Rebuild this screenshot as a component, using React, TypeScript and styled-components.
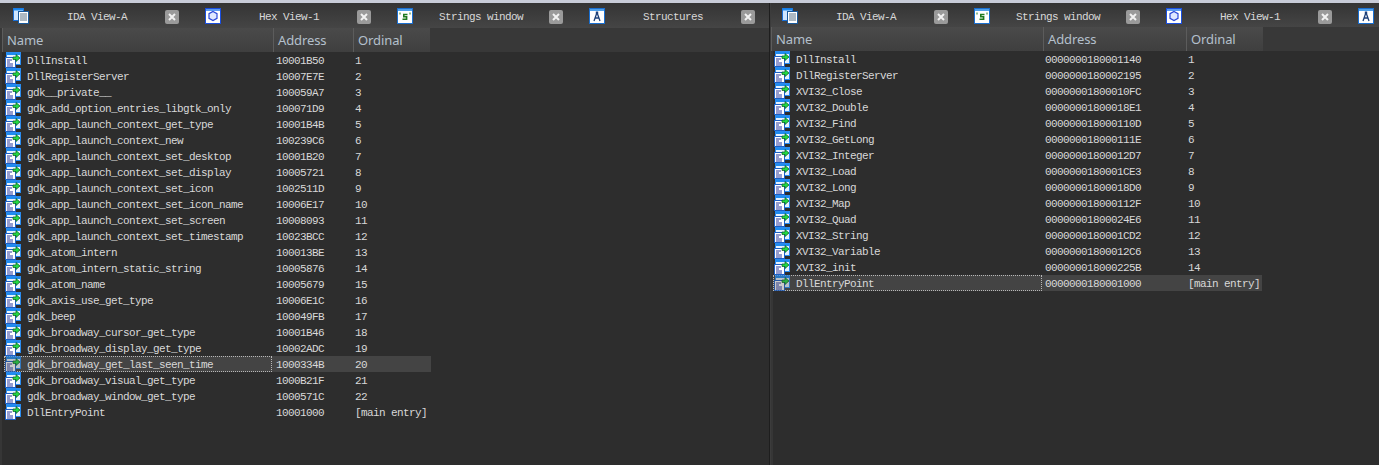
import React from 'react';
import styled, { createGlobalStyle } from 'styled-components';

const GlobalStyle = createGlobalStyle`
  html, body {
    margin: 0;
    padding: 0;
    background: #2d2d2d;
    overflow: hidden;
  }
  * {
    box-sizing: border-box;
  }
`;

const Screen = styled.div`
  width: 1379px;
  height: 465px;
  display: flex;
  flex-direction: column;
  overflow: hidden;
`;

const TopStrip = styled.div`
  height: 3px;
  flex: none;
  background: #c8ccd8;
`;

const Panes = styled.div`
  flex: 1;
  display: flex;
  min-height: 0;
`;

const Pane = styled.section<{ $width: number }>`
  width: ${p => p.$width}px;
  flex: none;
  display: flex;
  flex-direction: column;
  overflow: hidden;
  background: #2d2d2d;
`;

const PaneDivider = styled.div`
  width: 2px;
  flex: none;
  background: linear-gradient(90deg, #1e1e1e 50%, #3c3c3c 50%);
`;

const TabBar = styled.div<{ $height: number; $offset: number }>`
  height: ${p => p.$height}px;
  flex: none;
  display: flex;
  align-items: center;
  padding-left: ${p => p.$offset}px;
  background: linear-gradient(#343434, #454545);
`;

const Tab = styled.div`
  width: 192px;
  height: 100%;
  flex: none;
  display: flex;
  align-items: center;
  padding-top: 3px;
`;

const TabIcon = styled.svg`
  width: 16px;
  height: 16px;
  flex: none;
  margin-top: -2px;
`;

const TabLabel = styled.span`
  width: 136px;
  flex: none;
  text-align: center;
  font-family: "Liberation Mono", monospace;
  font-size: 11px;
  letter-spacing: -0.6px;
  color: #d8d8d8;
  white-space: pre;
`;

const CloseButton = styled.span`
  width: 14px;
  height: 14px;
  flex: none;
  display: flex;
  align-items: center;
  justify-content: center;
  border-radius: 2px;
  background: #9a9a9a;
`;

const HeaderBar = styled.div<{ $inset: number }>`
  height: 24px;
  flex: none;
  background: #383838;
  padding-left: ${p => p.$inset}px;
`;

const HeaderGrid = styled.div<{ $columns: string }>`
  display: grid;
  grid-template-columns: ${p => p.$columns};
  justify-content: start;
`;

const HeaderCell = styled.div`
  height: 24px;
  display: flex;
  align-items: center;
  padding-left: 4px;
  font-family: "Noto Sans", sans-serif;
  font-size: 13px;
  letter-spacing: -0.1px;
  color: #b4c0cc;
  background: linear-gradient(#4a4a4a, #3f3f3f);
  border-left: 1px solid #5c5c5c;
`;

const Body = styled.div<{ $inset: number }>`
  flex: 1;
  min-height: 0;
  padding-left: ${p => p.$inset}px;
  box-shadow: inset 2px 0 #363636;
`;

const Row = styled.div<{ $columns: string; $selected?: boolean }>`
  display: grid;
  width: max-content;
  grid-template-columns: ${p => p.$columns};
  background: ${p => (p.$selected ? '#444444' : 'transparent')};
`;

const NameCell = styled.div<{ $focused?: boolean }>`
  height: 16px;
  display: flex;
  align-items: center;
  padding-left: 1px;
  margin-right: 1px;
  outline: ${p => (p.$focused ? '1px dotted #b8b8b8' : 'none')};
  outline-offset: -1px;
`;

const RowIcon = styled.svg<{ $selected?: boolean }>`
  width: 16px;
  height: 16px;
  flex: none;
  margin-right: 6px;
  opacity: ${p => (p.$selected ? 0.72 : 1)};
`;

const Cell = styled.span<{ $pad?: number }>`
  height: 16px;
  line-height: 16px;
  padding-top: 1px;
  padding-left: ${p => p.$pad ?? 0}px;
  font-family: "Liberation Mono", monospace;
  font-size: 11px;
  letter-spacing: -0.6px;
  color: #d8d8d8;
  white-space: pre;
`;

type Kind = 'ida' | 'hex' | 'str' | 'struct';

const IconGlyph: React.FC<{ kind: Kind }> = ({ kind }) => {
  if (kind === 'ida') {
    return (
      <TabIcon viewBox="0 0 16 16">
        <rect x="0.5" y="0.5" width="10" height="12" fill="#cfe6ff" stroke="#1b6fd6" />
        <rect x="0.5" y="0.5" width="10" height="2" fill="#1b8af0" />
        <rect x="5.5" y="3.5" width="10" height="12" fill="#ffffff" stroke="#1a5a9c" />
        <path d="M7 6h7M7 8h7M7 10h7M7 12h7" stroke="#5c7488" />
      </TabIcon>
    );
  }
  if (kind === 'hex') {
    return (
      <TabIcon viewBox="0 0 16 16">
        <rect x="0.5" y="0.5" width="15" height="15" fill="#ffffff" stroke="#1a4fe0" />
        <rect x="1" y="1" width="14" height="2" fill="#5d9cf0" />
        <path d="M8 3.5l4 2.2v4.6l-4 2.2-4-2.2V5.7z" fill="#dfe8ff" stroke="#2a48d8" strokeWidth="1.2" />
      </TabIcon>
    );
  }
  if (kind === 'str') {
    return (
      <TabIcon viewBox="0 0 16 16">
        <rect x="0.5" y="0.5" width="15" height="15" fill="#ffffff" stroke="#1a6fd0" />
        <rect x="1" y="1" width="14" height="2" fill="#4fa0ea" />
        <path d="M10.5 6.5H6.8v2.2h2.8v2.6H5.5" fill="none" stroke="#1f7a1f" strokeWidth="1.6" />
        <path d="M3 4.5v2M13 4.5v2" stroke="#1f7a1f" />
      </TabIcon>
    );
  }
  return (
    <TabIcon viewBox="0 0 16 16">
      <rect x="0.5" y="0.5" width="15" height="15" fill="#ffffff" stroke="#1a6fd0" />
      <rect x="1" y="1" width="14" height="2" fill="#4fa0ea" />
      <path d="M8 4.5L5 13M8 4.5l3 8.5M5.8 10h4.4" fill="none" stroke="#1c3f78" strokeWidth="1.3" />
      <rect x="6.8" y="3.5" width="2.4" height="2.4" fill="#1c3f78" />
    </TabIcon>
  );
};

const ExportIcon: React.FC<{ selected?: boolean }> = ({ selected }) => (
  <RowIcon viewBox="0 0 16 16" $selected={selected}>
    <rect x="1.5" y="0.5" width="14" height="12" fill="#e4f1ff" stroke="#2a8cf0" />
    <rect x="2" y="1" width="13" height="2" fill="#1f8cf0" />
    <rect x="0.5" y="5.5" width="10" height="10" fill="#ffffff" stroke="#1c5fc4" />
    <path d="M2 8h5M2 10h3M2 12h6M2 14h6" stroke="#2a3aa0" />
    <path d="M8 5h3V2.5l4 3.5-4 3.5V7.5H8z" fill="#22d844" stroke="#0a5a1c" strokeWidth="0.7" />
  </RowIcon>
);

const CloseGlyph: React.FC = () => (
  <CloseButton>
    <svg width="8" height="8" viewBox="0 0 8 8">
      <path d="M1 1l6 6M7 1L1 7" stroke="#f2f2f2" strokeWidth="2" />
    </svg>
  </CloseButton>
);

type Entry = [string, string, string];

const leftEntries: Entry[] = [
  ['DllInstall', '10001B50', '1'],
  ['DllRegisterServer', '10007E7E', '2'],
  ['gdk__private__', '100059A7', '3'],
  ['gdk_add_option_entries_libgtk_only', '100071D9', '4'],
  ['gdk_app_launch_context_get_type', '10001B4B', '5'],
  ['gdk_app_launch_context_new', '100239C6', '6'],
  ['gdk_app_launch_context_set_desktop', '10001B20', '7'],
  ['gdk_app_launch_context_set_display', '10005721', '8'],
  ['gdk_app_launch_context_set_icon', '1002511D', '9'],
  ['gdk_app_launch_context_set_icon_name', '10006E17', '10'],
  ['gdk_app_launch_context_set_screen', '10008093', '11'],
  ['gdk_app_launch_context_set_timestamp', '10023BCC', '12'],
  ['gdk_atom_intern', '100013BE', '13'],
  ['gdk_atom_intern_static_string', '10005876', '14'],
  ['gdk_atom_name', '10005679', '15'],
  ['gdk_axis_use_get_type', '10006E1C', '16'],
  ['gdk_beep', '100049FB', '17'],
  ['gdk_broadway_cursor_get_type', '10001B46', '18'],
  ['gdk_broadway_display_get_type', '10002ADC', '19'],
  ['gdk_broadway_get_last_seen_time', '1000334B', '20'],
  ['gdk_broadway_visual_get_type', '1000B21F', '21'],
  ['gdk_broadway_window_get_type', '1000571C', '22'],
  ['DllEntryPoint', '10001000', '[main entry]'],
];

const rightEntries: Entry[] = [
  ['DllInstall', '0000000180001140', '1'],
  ['DllRegisterServer', '0000000180002195', '2'],
  ['XVI32_Close', '00000001800010FC', '3'],
  ['XVI32_Double', '00000001800018E1', '4'],
  ['XVI32_Find', '000000018000110D', '5'],
  ['XVI32_GetLong', '000000018000111E', '6'],
  ['XVI32_Integer', '00000001800012D7', '7'],
  ['XVI32_Load', '0000000180001CE3', '8'],
  ['XVI32_Long', '00000001800018D0', '9'],
  ['XVI32_Map', '000000018000112F', '10'],
  ['XVI32_Quad', '00000001800024E6', '11'],
  ['XVI32_String', '0000000180001CD2', '12'],
  ['XVI32_Variable', '00000001800012C6', '13'],
  ['XVI32_init', '000000018000225B', '14'],
  ['DllEntryPoint', '0000000180001000', '[main entry]'],
];

// label is left out for the tab that runs off the window edge
type TabInfo = { kind: Kind; label?: string };

const leftTabs: TabInfo[] = [
  { kind: 'ida', label: 'IDA View-A' },
  { kind: 'hex', label: 'Hex View-1' },
  { kind: 'str', label: 'Strings window' },
  { kind: 'struct', label: 'Structures' },
];

const rightTabs: TabInfo[] = [
  { kind: 'ida', label: 'IDA View-A' },
  { kind: 'str', label: 'Strings window' },
  { kind: 'hex', label: 'Hex View-1' },
  { kind: 'struct' },
];

const ExportPane: React.FC<{
  width: number;
  inset: number;
  tabHeight: number;
  tabOffset: number;
  headerColumns: string;
  rowColumns: string;
  addressPad: number;
  tabs: TabInfo[];
  entries: Entry[];
  selected: number;
}> = ({ width, inset, tabHeight, tabOffset, headerColumns, rowColumns, addressPad, tabs, entries, selected }) => (
  <Pane $width={width}>
    <TabBar $height={tabHeight} $offset={tabOffset}>
      {tabs.map(tab => (
        <Tab key={tab.kind}>
          <IconGlyph kind={tab.kind} />
          {tab.label && <TabLabel>{tab.label}</TabLabel>}
          {tab.label && <CloseGlyph />}
        </Tab>
      ))}
    </TabBar>
    <HeaderBar $inset={inset}>
      <HeaderGrid $columns={headerColumns}>
        <HeaderCell>Name</HeaderCell>
        <HeaderCell>Address</HeaderCell>
        <HeaderCell>Ordinal</HeaderCell>
      </HeaderGrid>
    </HeaderBar>
    <Body $inset={inset + 2}>
      {entries.map((entry, i) => (
        <Row key={entry[0]} $columns={rowColumns} $selected={i === selected}>
          <NameCell $focused={i === selected}>
            <ExportIcon selected={i === selected} />
            <Cell>{entry[0]}</Cell>
          </NameCell>
          <Cell $pad={addressPad}>{entry[1]}</Cell>
          <Cell $pad={2}>{entry[2]}</Cell>
        </Row>
      ))}
    </Body>
  </Pane>
);

const App: React.FC = () => (
  <Screen>
    <GlobalStyle />
    <TopStrip />
    <Panes>
      <ExportPane
        width={769}
        inset={2}
        tabHeight={25}
        tabOffset={13}
        headerColumns="271px 80px 77px"
        rowColumns="269px 80px 78px"
        addressPad={3}
        tabs={leftTabs}
        entries={leftEntries}
        selected={19}
      />
      <PaneDivider />
      <ExportPane
        width={608}
        inset={0}
        tabHeight={24}
        tabOffset={11}
        headerColumns="272px 143px 77px"
        rowColumns="270px 143px 76px"
        addressPad={2}
        tabs={rightTabs}
        entries={rightEntries}
        selected={14}
      />
    </Panes>
  </Screen>
);

export default App;
